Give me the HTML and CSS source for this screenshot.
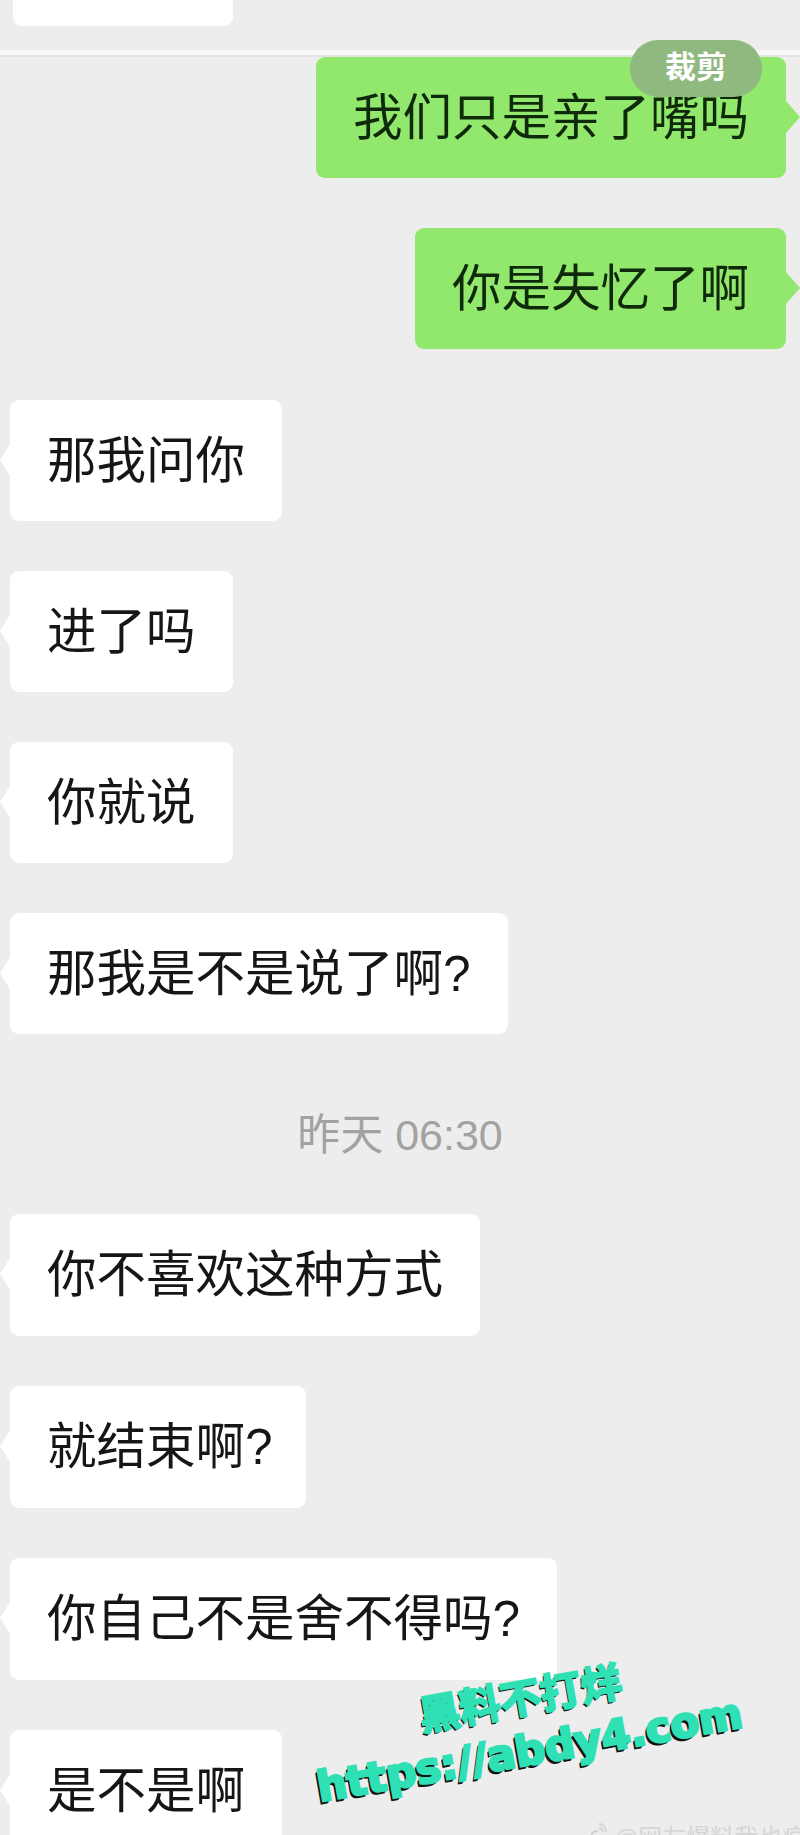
FILE: index.html
```html
<!DOCTYPE html>
<html lang="zh-CN">
<head>
  <meta charset="UTF-8" />
  <title>聊天记录</title>
  <link rel="stylesheet" href="styles.css">
</head>
<body>
  <div class="chat">
    <div class="cut-bubble"></div>
    <div class="divider"></div>

    <div class="msg me">
      <span class="crop-tag">裁剪</span>
      我们只是亲了嘴吗
    </div>
    <div class="msg me last-me">你是失忆了啊</div>

    <div class="msg you">那我问你</div>
    <div class="msg you">进了吗</div>
    <div class="msg you">你就说</div>
    <div class="msg you">那我是不是说了啊?</div>

    <div class="time">昨天 06:30</div>

    <div class="msg you late">你不喜欢这种方式</div>
    <div class="msg you late tight">就结束啊?</div>
    <div class="msg you late">你自己不是舍不得吗?</div>
    <div class="msg you late">是不是啊</div>
  </div>

  <div class="stamp">
    <div class="stamp-cn">黑料不打烊</div>
    <div class="stamp-url">https://abdy4.com</div>
  </div>

  <div class="weibo">
    <svg class="weibo-icon" width="18" height="14" viewBox="0 0 18 14" fill="none" stroke="#d2d2d2" stroke-width="2">
      <path d="M9 1c4 0 7 3 7 8"/>
      <path d="M9 5c2 0 3.500 1.500 3.500 4"/>
      <path d="M1 13c1-3 4-5 7-5"/>
    </svg>
    <span>@网友爆料我也疯狂</span>
  </div>
</body>
</html>
```

FILE: styles.css
```css
html, body {
  margin: 0;
  height: 1835px;
  overflow: hidden;
}
body {
  position: relative;
  background-color: #ededed;
  font-family: "Liberation Sans", "Noto Sans CJK SC", sans-serif;
  color: #161616;
}
.chat {
  display: flex;
  flex-direction: column;
  align-items: flex-start;
}
.cut-bubble {
  width: 220px;
  height: 26px;
  margin-left: 13px;
  background-color: #fff;
  border-radius: 0 0 9px 9px;
}
.divider {
  align-self: stretch;
  height: 5px;
  margin-top: 24px;
  background-color: #f7f7f7;
  border-bottom: 2px solid #e2e2e2;
}
.msg {
  position: relative;
  box-sizing: border-box;
  height: 121px;
  margin-bottom: 50px;
  padding: 0 37px;
  font-size: 49.5px;
  line-height: 121px;
  white-space: nowrap;
  border-radius: 9px;
}
.msg::after {
  content: "";
  position: absolute;
  top: 44px;
  border-style: solid;
  border-width: 16px 0;
  border-color: transparent;
}
.you {
  margin-left: 10px;
  background-color: #fff;
}
.you::after {
  left: -10px;
  border-right: 10px solid #fff;
}
.me {
  align-self: flex-end;
  margin-right: 14px;
  background-color: #92e86d;
  color: #0f2a0a;
}
.me::after {
  right: -14px;
  border-left: 14px solid #92e86d;
}
.last-me {
  margin-bottom: 51px;
}
.late {
  height: 122px;
}
.tight {
  padding-right: 33px;
}
.crop-tag {
  position: absolute;
  top: -17px;
  right: 24px;
  width: 132px;
  height: 57px;
  background-color: #8fb97f;
  border-radius: 28px;
  color: #fff;
  font-size: 31px;
  font-weight: 700;
  line-height: 55px;
  text-align: center;
}
.time {
  align-self: center;
  height: 134px;
  margin-top: -4px;
  font-size: 43px;
  line-height: 110px;
  color: #a2a2a2;
}
.stamp {
  position: absolute;
  left: 295px;
  top: 1674px;
  width: 460px;
  display: flex;
  flex-direction: column;
  align-items: center;
  transform: rotate(-10deg);
  color: #2fe0b5;
  font-family: "DejaVu Sans", "Noto Sans CJK SC", sans-serif;
  font-weight: 700;
}
.stamp-cn {
  font-size: 41px;
  line-height: 51px;
  -webkit-text-stroke: 2px #2fe0b5;
  text-shadow: -1px 1px 0 #111, -2px 2px 0 #111;
}
.stamp-url {
  font-size: 42px;
  line-height: 51px;
  white-space: nowrap;
  -webkit-text-stroke: 2.5px #2fe0b5;
  text-shadow: -1px 1px 0 #111, -2px 2px 0 #111, -3px 3px 0 #111;
}
.weibo {
  position: absolute;
  left: 590px;
  top: 1823px;
  display: flex;
  gap: 6px;
  font-size: 24px;
  line-height: 30px;
  color: #d6d6d6;
  white-space: nowrap;
}
```
